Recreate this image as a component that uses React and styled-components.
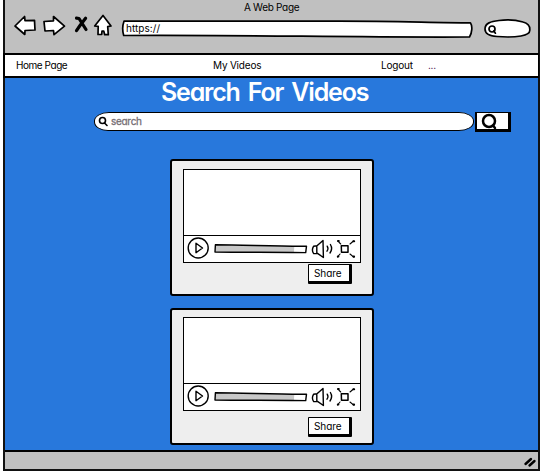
import React from 'react';
import styled, { createGlobalStyle } from 'styled-components';

const Global = createGlobalStyle`
  * { box-sizing: border-box; }
  body { margin: 0; background: #fff; overflow: hidden; }
`;

const Browser = styled.div`
  width: 543px;
  height: 471px;
  padding: 0 3px 0 3px;
  font-family: Inter, 'Liberation Sans', sans-serif;
  font-feature-settings: 'cv11';
  font-size: 10px;
  color: #000;
  background: #fff;
`;

const Frame = styled.div`
  display: flex;
  flex-direction: column;
  width: 537px;
  height: 471px;
  border: solid #111;
  border-width: 0 2px 2px 2px;
  background: #2878dc;
`;

const Header = styled.header`
  flex: none;
  height: 53px;
  background: #c0c0c0;
`;

const WindowTitle = styled.div`
  height: 16px;
  padding: 0 0 0 239px;
  line-height: 14px;
  letter-spacing: ${(p) => p.$spacing};
  white-space: nowrap;
`;

const Toolbar = styled.div`
  display: flex;
  height: 26px;
`;

const Drawing = styled.svg`
  flex: none;
  display: block;
  overflow: visible;
  fill: ${(p) => p.$fill || 'none'};
  stroke: #000;
  stroke-width: ${(p) => p.$stroke || 1.6};
  stroke-linejoin: round;
  stroke-linecap: round;
`;

const Address = styled.div`
  position: relative;
  width: 352px;
  height: 20px;
  margin: 3px 0 0 7px;
  padding: 2px 0 0 4px;
  line-height: 15px;
  letter-spacing: 0.05px;
`;

const Outline = styled(Drawing)`
  position: absolute;
  inset: 0;
`;

const Over = styled.span`
  position: relative;
`;

const Nav = styled.nav`
  flex: none;
  display: grid;
  grid-template-columns: 197px 168px 47px 1fr;
  height: 25px;
  margin: 0 -1px 0 -2px;
  padding-left: 11px;
  border: 2px solid #000;
  border-right-width: 1px;
  background: #fff;
  line-height: 21px;
  white-space: nowrap;
`;

const NavItem = styled.a`
  letter-spacing: ${(p) => p.$spacing};
  color: ${(p) => p.$color || '#000'};
`;

const Content = styled.main`
  flex: 1;
  display: flex;
  flex-direction: column;
`;

const Heading = styled.h1`
  height: 34px;
  margin: 0;
  padding-left: 156px;
  font-size: 25px;
  font-weight: 600;
  line-height: 29px;
  letter-spacing: -1.2px;
  word-spacing: 3px;
  color: #fff;
  white-space: nowrap;
`;

const SearchRow = styled.div`
  display: flex;
  height: 20px;
  margin-left: 89px;
`;

const SearchField = styled.div`
  display: flex;
  width: 380px;
  height: 19px;
  padding: 4px 0 0 4px;
  border: 1.5px solid #000;
  border-radius: 15px 15px 15px 14px / 9px 9px 9px 9px;
  background: #fff;
  color: #777076;
  line-height: 10px;
`;

const Placeholder = styled.span`
  margin-left: 3px;
  line-height: 9px;
  letter-spacing: -0.3px;
  -webkit-text-stroke: 0.3px #777076;
`;

const SearchButton = styled.button`
  width: 36px;
  height: 20px;
  margin-left: 1px;
  padding: 0 0 0 5px;
  border: solid #000;
  border-width: 1px 3px 3px 2px;
  background: #fff;
`;

const Card = styled.article`
  width: 204px;
  height: ${(p) => p.$height}px;
  margin: ${(p) => p.$gap}px 0 0 165px;
  padding: ${(p) => p.$inset}px 0 0 11px;
  border: 2px solid #000;
  border-radius: 3px;
  background: #eee;
`;

const Player = styled.div`
  width: 178px;
  height: 94px;
  border: 1.5px solid #000;
  background: #fff;
`;

const Screen = styled.div`
  height: 66px;
  border-bottom: 1.5px solid #000;
`;

const Controls = styled.div`
  display: flex;
  height: 26px;
`;

const ShareButton = styled.button`
  display: block;
  width: 44px;
  height: 20px;
  margin: ${(p) => p.$gap}px 0 0 125px;
  padding: 0 0 0 5px;
  border: solid #000;
  border-width: 1.5px 3px 3px 1.5px;
  border-radius: 1px;
  background: #fff;
  color: #000;
  font: 10px/15px Inter, sans-serif;
  font-feature-settings: 'cv11';
  letter-spacing: -0.1px;
  text-align: left;
`;

const Footer = styled.footer`
  flex: none;
  display: flex;
  justify-content: flex-end;
  height: 19px;
  border-top: 2px solid #000;
  background: #c0c0c0;
`;

function NavigationIcons() {
  return (
    <Drawing width="110" height="26" viewBox="0 0 110 26" $fill="#fff" $stroke={1.7}>
      <path d="M10 10 19.6 .5 20 4.7 29.5 4.4 30 14 20 14.5 19.8 18.5Z" />
      <path d="M39 5.5 48.5 4.8 48.5 .5 59.5 10.2 49 18.6 48.5 14.5 40 15Z" />
      <path d="M71.5 2.2 74 2.5 81 13.5M80.6 2.2 75 9.5 71.5 14.6" fill="none" strokeWidth="3.2" strokeLinecap="round" />
      <path d="M98 -.5 106 10 102.7 10.7 103.3 18.7 99.7 18.7 98.8 15.2 97 15.2 96.7 18.5 93 18.5 93.2 10.3 89.7 10Z" />
    </Drawing>
  );
}

function SketchSearch() {
  return (
    <Drawing width="48" height="20" viewBox="0 0 48 20" $fill="#fff" $stroke={1.7}>
      <path d="M1 10C1 4 7 2.5 15 1.5 23 .4 32 1 39 3 45 4.5 46 8 45.8 11 46 14 43 16 37 17 29 18.4 19 18 13 17.5 5 17 1 15 1 10Z" />
      <circle cx="8" cy="10" r="3" />
      <path d="M9.8 12 11.4 14.2" />
    </Drawing>
  );
}

function PlayerControls() {
  return (
    <Controls>
      <Drawing width="175" height="26" viewBox="0 0 175 26" $stroke={1.4}>
        <circle cx="14.2" cy="12" r="10" />
        <path d="M12 7.2 18.5 12 12 16.7Z" />
        <path d="M31.4 9 110.7 10.5 110 16.5 31 16Z" fill="#c8c8c8" stroke="none" />
        <path d="M110.5 10.5 122 10.4 121.7 16.4 110 16.4Z" fill="#fff" stroke="none" />
        <path d="M31.4 8.8C61 9 97 10.5 122.5 10.2L121.7 16.6C92 16 61 16.5 31 16Z" />
        <path d="M129.5 10.3 133 9.7 139 4.5 139.4 21.5 133.5 17.4 129.7 17.6C128 15.2 128.2 12.5 129.5 10.3ZM132.8 10.4 132.8 17" />
        <path d="M143.2 10.2Q144.8 12.7 143 15.2M146.4 8.5Q149 12.6 146 17" />
        <path d="M157.3 9.8H164V16.2H157.5Z" strokeWidth="1.5" />
        <path d="M154 5.2 156.7 8M166 8 169.5 5M166 18 170 21.3M156 18 153.5 21" strokeWidth="1.1" />
        <path d="M154 5h.8M169.4 5.3h.8M169.3 20.6h.8M153.8 20.6h.6" strokeWidth="2" />
      </Drawing>
    </Controls>
  );
}

function VideoCard({ height, gap, inset, shareGap }) {
  return (
    <Card $height={height} $gap={gap} $inset={inset}>
      <Player>
        <Screen />
        <PlayerControls />
      </Player>
      <ShareButton $gap={shareGap}>Share</ShareButton>
    </Card>
  );
}

const BrowserSearch = styled.div`
  margin: 3px 0 0 10px;
`;

export default function App() {
  return (
    <Browser>
      <Global />
      <Frame>
        <Header>
          <WindowTitle $spacing="-0.3px">A Web Page</WindowTitle>
          <Toolbar>
            <NavigationIcons />
            <Address>
              <Outline width="352" height="20" viewBox="0 0 352 20" $fill="#fff" $stroke={1.7}>
                <path d="M2 2.2C70 1.8 145 2.4 210 2.2 270 2 310 3.8 348.5 3.9 350.7 7 350 14 347.5 18 230 18.6 120 15.7 1.7 16.5 .4 12 .6 6 2 2.2Z" />
              </Outline>
              <Over>https://</Over>
            </Address>
            <BrowserSearch>
              <SketchSearch />
            </BrowserSearch>
          </Toolbar>
        </Header>
        <Nav>
          <NavItem $spacing="-0.45px">Home Page</NavItem>
          <NavItem $spacing="-0.2px">My Videos</NavItem>
          <NavItem $spacing="-0.2px">Logout</NavItem>
          <NavItem $spacing="-0.3px" $color="#400040">...</NavItem>
        </Nav>
        <Content>
          <Heading>Search For Videos</Heading>
          <SearchRow>
            <SearchField>
              <Drawing width="9" height="9" viewBox="0 0 9 9">
                <circle cx="3.5" cy="3.5" r="3" />
                <path d="M5.5 6 8 8.5" />
              </Drawing>
              <Placeholder>search</Placeholder>
            </SearchField>
            <SearchButton aria-label="Search">
              <Drawing width="17" height="16" viewBox="0 0 17 16" $stroke={2.5}>
                <circle cx="7" cy="8" r="6" />
                <path d="M11 12.5 13 15" />
              </Drawing>
            </SearchButton>
          </SearchRow>
          <VideoCard height={137} gap={27} inset={8} shareGap={1} />
          <VideoCard height={137} gap={12} inset={7} shareGap={6} />
        </Content>
        <Footer>
          <Drawing width="18" height="17" viewBox="0 0 18 17" $stroke={2.4}>
            <path d="M5.5 12 11 7M9.5 13.5 14.5 9" />
          </Drawing>
        </Footer>
      </Frame>
    </Browser>
  );
}
